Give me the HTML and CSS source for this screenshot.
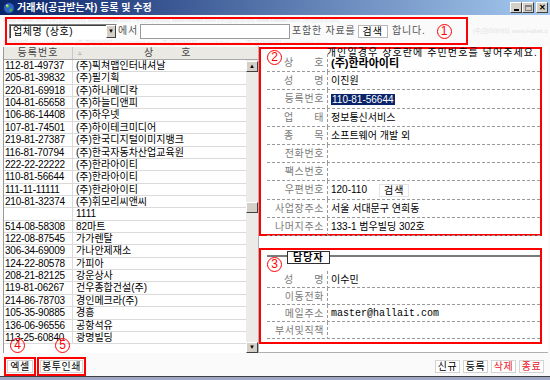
FILE: index.html
```html
<!DOCTYPE html>
<html lang="ko">
<head>
<meta charset="utf-8">
<title>거래처(공급받는자) 등록 및 수정</title>
<link rel="stylesheet" href="styles.css">
</head>
<body>
<div class="win">
	<div class="titlebar">
		<svg class="appicon" viewBox="0 0 12 12">
			<circle cx="6" cy="6" r="5.5" fill="#2d62c8" stroke="#0b2a6e" stroke-width="1"/>
			<path d="M3 3.5 L5.5 2.5 L6.5 4.5 L5 6 L3.5 5.5 Z" fill="#3fb34a"/>
			<path d="M6.5 7 L9 6.5 L9.5 8.5 L7.5 10 L6.5 9 Z" fill="#3fb34a"/>
			<circle cx="4" cy="3.5" r="1" fill="#f4e36a"/>
		</svg>
		<span class="title">거래처(공급받는자) 등록 및 수정</span>
		<div class="ctrls">
			<span class="cbtn min"><i></i></span>
			<span class="cbtn max"><i></i></span>
			<span class="cbtn close">✕</span>
		</div>
	</div>
	<div class="frame">
		<div class="searchrow">
			<div class="wm">
				<p>www.Hallait.com (주)한라아이티 www.Hallait.com (주)한라아이티 www.Hallait.com (주)한라아이티 www.Hallait.com (주)한라아이티</p>
				<p class="wm-side">(주)한라아이티 www.Hallait.com</p>
				<p>(주)한라아이티 www.Hallait.com (주)한라아이티 www.Hallait.com (주)한라아이티 www.Hallait.com (주)한라아이티 www.Hallait.com</p>
			</div>
			<div class="searchbox">
				<div class="combo"><span>업체명 (상호)</span><i>▼</i></div>
				<span class="txt t1">에서</span>
				<span class="kw"></span>
				<span class="txt t2">포함한 자료를</span>
				<span class="btn">검색</span>
				<span class="txt t3">합니다.</span>
				<span class="mark m1">1</span>
			</div>
		</div>
		<div class="main">
			<div class="list">
				<div class="lhead">
					<span class="c1">등록번호</span>
					<span class="c2"><em>▵</em><b>상</b><b>호</b></span>
				</div>
				<div class="lbody">
					<div class="rows">
						<div class="row"><span>112-81-49737</span><span>(주)픽쳐맵인터내셔날</span></div>
						<div class="row"><span>205-81-39832</span><span>(주)필기획</span></div>
						<div class="row"><span>220-81-69918</span><span>(주)하나메디칵</span></div>
						<div class="row"><span>104-81-65658</span><span>(주)하늘디앤피</span></div>
						<div class="row"><span>106-86-14408</span><span>(주)하우넷</span></div>
						<div class="row"><span>107-81-74501</span><span>(주)하이테크미디어</span></div>
						<div class="row"><span>219-81-27387</span><span>(주)한국디지털이미지뱅크</span></div>
						<div class="row"><span>116-81-70794</span><span>(주)한국자동차산업교육원</span></div>
						<div class="row"><span>222-22-22222</span><span>(주)한라아이티</span></div>
						<div class="row"><span>110-81-56644</span><span>(주)한라아이티</span></div>
						<div class="row"><span>111-11-11111</span><span>(주)한라아이티</span></div>
						<div class="row"><span>210-81-32374</span><span>(주)휘모리씨앤씨</span></div>
						<div class="row"><span></span><span>1111</span></div>
						<div class="row"><span>514-08-58308</span><span>82마트</span></div>
						<div class="row"><span>122-08-87545</span><span>가가렌탈</span></div>
						<div class="row"><span>306-34-69009</span><span>가나안제재소</span></div>
						<div class="row"><span>124-22-80578</span><span>가피아</span></div>
						<div class="row"><span>208-21-82125</span><span>강운상사</span></div>
						<div class="row"><span>119-81-06267</span><span>건우종합건설(주)</span></div>
						<div class="row"><span>214-86-78703</span><span>경인메크라(주)</span></div>
						<div class="row"><span>105-35-90885</span><span>경흥</span></div>
						<div class="row"><span>136-06-96556</span><span>공항석유</span></div>
						<div class="row"><span>113-25-60840</span><span>광명빌딩</span></div>
					</div>
					<div class="vscroll">
						<span class="sbtn">▲</span>
						<span class="thumb"></span>
						<span class="sbtn down">▼</span>
					</div>
				</div>
			</div>
			<div class="detail">
				<div class="box biz">
					<span class="mark m2">2</span>
					<p class="note">개인일경우 상호란에 주민번호를 넣어주세요.</p>
					<div class="frow"><span class="lbl"><i>상 호</i></span><span class="val strong">(주)한라아이티</span></div>
					<div class="frow"><span class="lbl"><i>성 명</i></span><span class="val">이진원</span></div>
					<div class="frow"><span class="lbl">등록번호</span><span class="val"><mark>110-81-56644</mark></span></div>
					<div class="frow"><span class="lbl"><i>업 태</i></span><span class="val">정보통신서비스</span></div>
					<div class="frow"><span class="lbl"><i>종 목</i></span><span class="val">소프트웨어 개발 외</span></div>
					<div class="frow"><span class="lbl">전화번호</span><span class="val"></span></div>
					<div class="frow"><span class="lbl">팩스번호</span><span class="val"></span></div>
					<div class="frow"><span class="lbl">우편번호</span><span class="val">120-110<span class="btn zip">검색</span></span></div>
					<div class="frow"><span class="lbl">사업장주소</span><span class="val">서울 서대문구 연희동</span></div>
					<div class="frow"><span class="lbl">나머지주소</span><span class="val">133-1 범우빌딩 302호</span></div>
				</div>
				<div class="box staff">
					<span class="mark m3">3</span>
					<div class="ghead"><span class="gtab">담당자</span></div>
					<div class="frow"><span class="lbl"><i>성 명</i></span><span class="val">이수민</span></div>
					<div class="frow"><span class="lbl">이동전화</span><span class="val"></span></div>
					<div class="frow"><span class="lbl">메일주소</span><span class="val mono">master@hallait.com</span></div>
					<div class="frow"><span class="lbl">부서및직책</span><span class="val"></span></div>
				</div>
			</div>
		</div>
		<div class="bottombar">
			<div class="rbox excel"><span class="mark m4">4</span><span class="bbtn">엑셀</span></div>
			<div class="rbox env"><span class="mark m5">5</span><span class="bbtn">봉투인쇄</span></div>
			<div class="actions">
				<span class="bbtn">신규</span>
				<span class="bbtn">등록</span>
				<span class="bbtn red">삭제</span>
				<span class="bbtn red">종료</span>
			</div>
		</div>
	</div>
</div>
</body>
</html>
```

FILE: styles.css
```css
*{ margin:0; padding:0; box-sizing:border-box;}
body{ width:550px; height:380px; overflow:hidden; background:#9ca8c6; font:10px/12px "Liberation Sans","Noto Sans CJK KR",sans-serif; color:#000;}
.win{ width:550px; height:377px; background:#fafafa; border-bottom:1px solid #404040; display:flex; flex-direction:column;}

/* title bar */
.titlebar{ height:15px; display:flex; align-items:center; padding:0 2px 0 3px; background:linear-gradient(to right,#0a246a,#a6caf0); color:#fff;}
.appicon{ width:12px; height:12px; margin-right:2px;}
.title{ flex:1; font-size:10px; line-height:12px; font-weight:bold;}
.ctrls{ display:flex;}
.cbtn{ width:12px; height:11px; background:#d4d0c8; border:1px solid; border-color:#fff #404040 #404040 #fff; display:flex; align-items:center; justify-content:center; font-size:8px; line-height:8px; font-weight:bold; color:#000;}
.cbtn i{ display:block;}
.min i{ width:5px; height:2px; background:#000; margin-top:4px;}
.max i{ width:7px; height:6px; border:1px solid #808080; border-top-width:2px;}
.close{ margin-left:2px;}

.frame{ flex:1; display:flex; flex-direction:column; padding:0 2px 0 3px;}

/* search */
.searchrow{ height:31px; position:relative; padding:2px 0 0 2px; overflow:hidden;}
.wm{ position:absolute; left:0; right:0; top:1px; bottom:0; overflow:hidden; color:#e2e2e2; font-size:6px; line-height:8px; white-space:nowrap;}
.wm p{ height:8px;}
.wm .wm-side{ height:15px; line-height:15px; padding-left:470px;}
.wm p:last-child{ margin-left:-12px;}
.searchbox{ position:relative; width:463px; height:28px; border:2px solid #f00; display:flex; align-items:center; padding-left:2px;}
.combo{ width:108px; height:15px; background:#fff; border:1px solid; border-color:#808080 #fff #fff #808080; box-shadow:inset 1px 1px 0 #404040; display:flex; align-items:center;}
.combo span{ flex:1; padding-left:3px; font-size:10px; line-height:13px; letter-spacing:0.6px; white-space:nowrap;}
.combo i{ width:10px; height:13px; background:#d4d0c8; border:1px solid; border-color:#fff #404040 #404040 #fff; font-style:normal; font-size:6px; line-height:11px; text-align:center;}
.txt{ color:#555; letter-spacing:0.8px; white-space:nowrap;}
.t1{ margin:0 2px 0 1px;}
.kw{ width:150px; height:15px; background:#fff; border:1px solid #9a9a9a;}
.t2{ margin-left:2px;}
.btn{ display:inline-block; height:13px; padding:0 4px; background:#fff; border:1px solid #b8b8b8; line-height:11px; letter-spacing:1px; white-space:nowrap;}
.searchbox .btn{ margin-left:2px;}
.t3{ margin-left:4px;}
.mark{ width:15px; height:15px; border:1px solid #f00; border-radius:50%; color:#f00; font-size:12px; line-height:13px; text-align:center;}
.m1{ margin-left:11px;}

/* list */
.main{ height:307px; display:flex;}
.list{ width:255px; margin-top:1px; border-left:1px solid #9a9a9a; display:flex; flex-direction:column;}
.lhead{ height:13px; display:grid; grid-template-columns:69px 1fr; background:#ebe9e4; border-bottom:1px solid #a8a8a8; color:#444; line-height:12px;}
.lhead .c1{ text-align:center; border-right:1px solid #c8c8c8; letter-spacing:1px;}
.lhead .c2{ display:flex; gap:28px; padding-left:5px;}
.lhead em{ font-style:normal; font-size:7px; color:#999; width:38px;}
.lhead b{ font-weight:normal;}
.lbody{ flex:1; display:flex; background:#fff;}
.rows{ flex:1;}
.row{ height:12.37px; display:grid; grid-template-columns:69px 1fr; border-bottom:1px solid #dadada; line-height:11px; white-space:nowrap; overflow:hidden;}
.row span:first-child{ padding-left:1px; border-right:1px solid #dadada; letter-spacing:-0.2px;}
.row span:last-child{ padding-left:3px;}
.vscroll{ width:12px; display:flex; flex-direction:column; background:#ecebe8; padding-top:1px;}
.sbtn{ height:11px; background:#d4d0c8; border:1px solid; border-color:#fff #404040 #404040 #fff; font-size:6px; line-height:9px; text-align:center;}
.thumb{ height:11px; margin-top:130px; background:#d4d0c8; border:1px solid; border-color:#fff #404040 #404040 #fff;}
.down{ margin-top:auto;}

/* detail */
.detail{ width:290px; background:#fff; border-left:1px solid #b0b0b0; border-bottom:1px solid #b0b0b0; padding-top:1px;}
.box{ position:relative; width:283px; border:2px solid #f00; padding-left:6px;}
.biz{ height:189px;}
.staff{ height:96px; margin-top:12px;}
.box .mark{ position:absolute; left:6px;}
.m2{ top:1px;}
.m3{ top:7px;}
.note{ height:5px; margin-top:-1px; line-height:9px; text-align:right; padding-right:2px; letter-spacing:1.1px; white-space:nowrap;}
.frow{ height:18.2px; display:flex; align-items:center; line-height:10px; background:repeating-linear-gradient(to right,#9a9a9a 0 3px,transparent 3px 5px) left bottom/100% 1px no-repeat;}
.biz .note + .frow{ margin-top:1px;}
.staff .frow{ height:17px;}
.lbl{ width:61px; height:100%; display:flex; align-items:center; justify-content:flex-end; padding-right:4px; color:#7a7a7a; letter-spacing:0.6px; background:repeating-linear-gradient(to bottom,#9a9a9a 0 3px,transparent 3px 5px) right top/1px 100% no-repeat;}
.lbl i{ display:inline-block; width:40px; font-style:normal; text-align:justify; text-align-last:justify;}
.val{ padding-left:3px; display:flex; align-items:center; white-space:nowrap;}
.strong{ font-weight:bold; font-size:11px;}
mark{ background:#0a246a; color:#fff; padding:0 1px; line-height:11px;}
.zip{ margin-left:12px; border-color:#e4e4e4;}
.mono{ font-family:"Liberation Mono",monospace; font-size:10px;}
.ghead{ height:21px; padding:1px 0 0 20px; background:linear-gradient(#7a7a7a,#7a7a7a) left 5px/100% 2px no-repeat;}
.gtab{ display:inline-block; height:13px; padding:0 5px; background:#fff; border:1px solid #303030; font-weight:bold; line-height:11px; letter-spacing:1px;}

/* bottom */
.bottombar{ height:23px; display:flex; align-items:flex-end; padding-left:1px;}
.rbox{ position:relative; height:19px; border:2px solid #f00; padding:1px; display:flex;}
.excel{ width:32px;}
.env{ width:49px; margin-left:1px;}
.rbox .bbtn{ flex:1;}
.rbox .mark{ position:absolute; top:-21px;}
.m4{ left:4px;}
.m5{ left:16px;}
.bbtn{ display:inline-block; height:13px; background:#fff; border:1px solid #d4d4d4; line-height:11px; text-align:center; letter-spacing:0.5px; white-space:nowrap;}
.actions{ margin:0 4px 3px auto; display:flex; gap:3px;}
.actions .bbtn{ width:25px;}
.red{ color:#e8202a;}
```
